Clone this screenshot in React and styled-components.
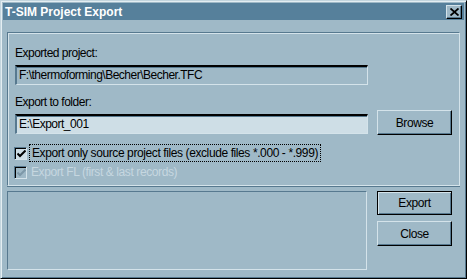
import React from "react";
import styled, { createGlobalStyle } from "styled-components";

const BG = "#9fb9c7";
const LIGHT = "#d4e3ea";
const DARK = "#57798f";
const FIELD = "#cedee6";

const Global = createGlobalStyle`
  html, body {
    margin: 0;
    padding: 0;
    background: ${BG};
  }
  body {
    font-family: "Liberation Sans", Arial, sans-serif;
    font-size: 12px;
  }
`;

export default function App() {
  return (
    <Window>
      <Global />
      <TitleBar>
        <Title>T-SIM Project Export</Title>
        <CloseBox>
          <svg width="9" height="8" viewBox="0 0 9 8">
            <path d="M0.5 0.5 L8.5 7.5 M8.5 0.5 L0.5 7.5" stroke="#000" strokeWidth="1.8" />
          </svg>
        </CloseBox>
      </TitleBar>

      <Body>
        <Group>
          <Label>Exported project:</Label>
          <Field readOnly>F:\thermoforming\Becher\Becher.TFC</Field>

          <Label $top={10}>Export to folder:</Label>
          <FieldRow>
            <Field>E:\Export_001</Field>
            <Button>Browse</Button>
          </FieldRow>

          <Check $top={11}>
            <Box>
              <Tick />
            </Box>
            <Focus>Export only source project files (exclude files *.000 - *.999)</Focus>
          </Check>
          <Check $top={5} $disabled>
            <Box $disabled>
              <Tick $disabled />
            </Box>
            <span>Export FL (first &amp; last records)</span>
          </Check>
        </Group>

        <BottomRow>
          <Log />
          <Buttons>
            <Button $default>Export</Button>
            <Button>Close</Button>
          </Buttons>
        </BottomRow>
      </Body>
    </Window>
  );
}

function Tick({ $disabled }) {
  return (
    <svg width="9" height="8" viewBox="0 0 9 8">
      <path
        d="M0.5 3.5 L3 6 L8.5 0.5"
        fill="none"
        stroke={$disabled ? "#7d98a8" : "#000"}
        strokeWidth="2"
      />
    </svg>
  );
}

const Window = styled.div`
  box-sizing: border-box;
  width: 467px;
  height: 279px;
  background: ${BG};
  border-top: 1px solid #c3d5de;
  border-left: 1px solid #c3d5de;
  border-right: 1px solid #000;
  border-bottom: 1px solid #000;
  box-shadow: inset 1px 1px 0 #e4eef2, inset -1px -1px 0 ${DARK};
  padding: 2px;
  display: flex;
  flex-direction: column;
`;

const TitleBar = styled.div`
  height: 18px;
  background: #56809b;
  display: flex;
  align-items: center;
  justify-content: space-between;
  padding: 0 2px 0 2px;
`;

const Title = styled.span`
  color: #fff;
  font-weight: bold;
  font-size: 12px;
`;

const CloseBox = styled.div`
  box-sizing: border-box;
  width: 16px;
  height: 14px;
  background: ${BG};
  border-top: 1px solid ${LIGHT};
  border-left: 1px solid ${LIGHT};
  border-right: 1px solid #000;
  border-bottom: 1px solid #000;
  box-shadow: inset -1px -1px 0 ${DARK};
  display: flex;
  align-items: center;
  justify-content: center;
`;

const Body = styled.div`
  flex: 1;
  padding: 12px 4px 4px 4px;
  display: flex;
  flex-direction: column;
  gap: 5px;
`;

const Group = styled.div`
  box-sizing: border-box;
  height: 154px;
  border-top: 1px solid ${DARK};
  border-left: 1px solid ${DARK};
  border-right: 1px solid ${LIGHT};
  border-bottom: 1px solid ${LIGHT};
  box-shadow: inset 1px 1px 0 ${LIGHT}, 0 1px 0 ${DARK};
  padding: 13px 7px 0 7px;
  display: flex;
  flex-direction: column;
`;

const Label = styled.div`
  color: #000;
  line-height: 14px;
  letter-spacing: -0.5px;
  margin-top: ${(p) => p.$top || 0}px;
  margin-bottom: 5px;
`;

const Field = styled.div`
  box-sizing: border-box;
  width: 353px;
  height: 20px;
  background: ${(p) => (p.readOnly ? BG : FIELD)};
  border-top: 2px solid #000;
  border-left: 2px solid ${DARK};
  border-right: 1px solid ${LIGHT};
  border-bottom: 1px solid ${LIGHT};
  box-shadow: inset 0 1px 0 ${DARK};
  padding: 0 2px;
  line-height: 17px;
  letter-spacing: -0.5px;
  color: #000;
  white-space: nowrap;
`;

const FieldRow = styled.div`
  display: flex;
  align-items: flex-end;
  gap: 9px;
  margin-top: -4px;

  & > ${Field} {
    margin-bottom: 1px;
  }
`;

const Button = styled.div`
  box-sizing: border-box;
  width: 75px;
  height: ${(p) => (p.$default ? 24 : 25)}px;
  background: ${BG};
  border-top: 1px solid ${(p) => (p.$default ? "#000" : LIGHT)};
  border-left: 1px solid ${(p) => (p.$default ? "#000" : LIGHT)};
  border-right: 1px solid #000;
  border-bottom: 1px solid #000;
  box-shadow: ${(p) => (p.$default ? `inset 1px 1px 0 ${LIGHT}, ` : "")}inset -1px -1px 0 ${DARK};
  display: flex;
  align-items: center;
  justify-content: center;
  letter-spacing: -0.4px;
  color: #000;
`;

const Check = styled.div`
  display: flex;
  align-items: center;
  gap: 4px;
  margin-top: ${(p) => p.$top}px;
  margin-left: -1px;
  line-height: 14px;
  letter-spacing: -0.4px;
  color: ${(p) => (p.$disabled ? "#c6d7e0" : "#000")};
`;

const Box = styled.div`
  box-sizing: border-box;
  width: 13px;
  height: 13px;
  background: ${(p) => (p.$disabled ? BG : FIELD)};
  border-top: 1px solid ${DARK};
  border-left: 1px solid ${DARK};
  border-right: 1px solid ${LIGHT};
  border-bottom: 1px solid ${LIGHT};
  box-shadow: inset 1px 1px 0 #000;
  display: flex;
  align-items: center;
  justify-content: center;
  padding: 1px 0 0 1px;
`;

const Focus = styled.span`
  outline: 1px dotted #000;
  outline-offset: 1px;
  padding: 0 1px;
`;

const BottomRow = styled.div`
  display: flex;
  gap: 10px;
  flex: 1;
  padding-bottom: 2px;
`;

const Log = styled.div`
  box-sizing: border-box;
  width: 360px;
  height: 79px;
  border-top: 1px solid ${DARK};
  border-left: 1px solid ${DARK};
  border-right: 1px solid ${LIGHT};
  border-bottom: 1px solid ${LIGHT};
`;

const Buttons = styled.div`
  display: flex;
  flex-direction: column;
  gap: 6px;
`;
